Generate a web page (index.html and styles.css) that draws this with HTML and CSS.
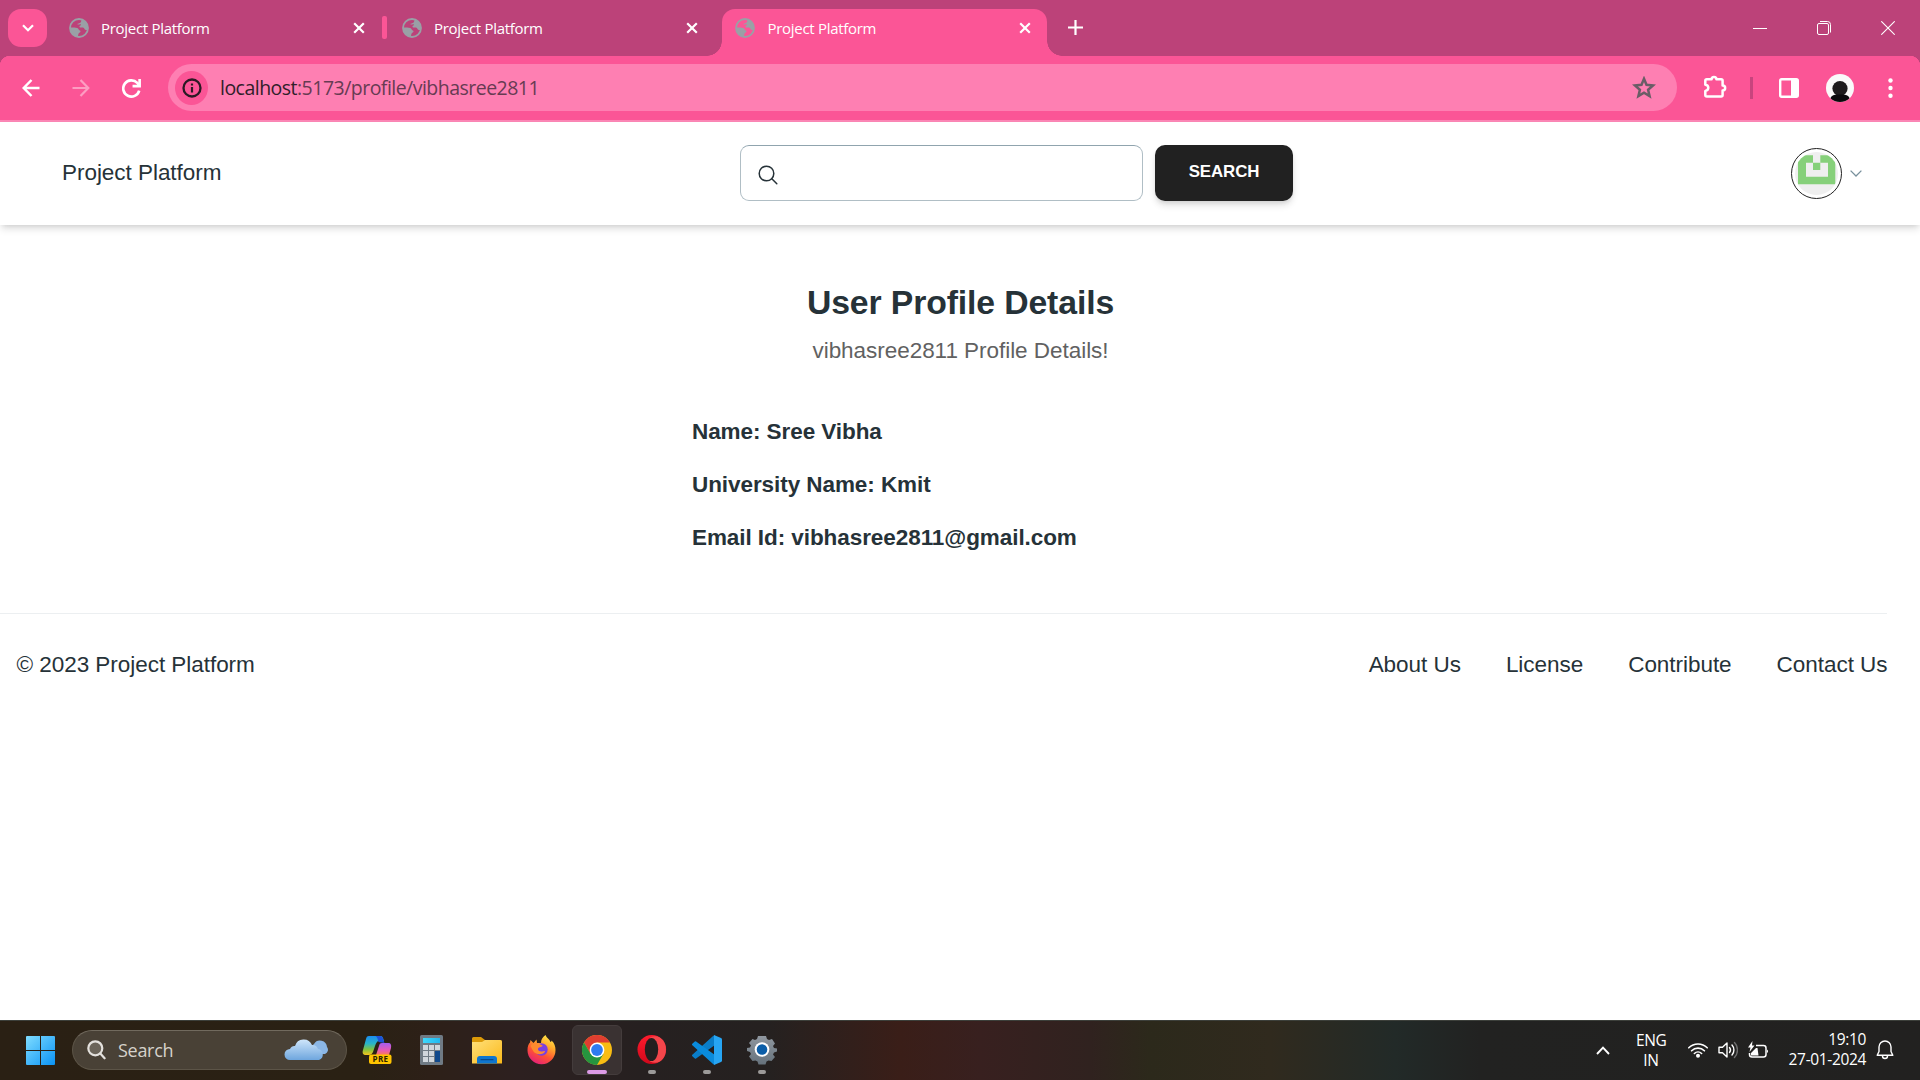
FILE: index.html
```html
<!DOCTYPE html>
<html lang="en">
<head>
<meta charset="utf-8">
<title>Project Platform</title>
<link rel="stylesheet" href="styles.css">
</head>
<body>
<svg width="0" height="0" class="defs" aria-hidden="true">
  <defs>
    <linearGradient id="win" x1="0" y1="0" x2="1" y2="1"><stop offset="0" stop-color="#7fdcff"/><stop offset="1" stop-color="#0a93f5"/></linearGradient>
    <linearGradient id="cloud" x1="0" y1="0" x2="0" y2="1"><stop offset="0" stop-color="#cfe6fb"/><stop offset="1" stop-color="#6ea6de"/></linearGradient>
    <linearGradient id="cop1" x1="0" y1="0" x2="0" y2="1"><stop offset="0" stop-color="#1b8df0"/><stop offset=".4" stop-color="#28b4c8"/><stop offset=".7" stop-color="#7fc241"/><stop offset="1" stop-color="#f8c51c"/></linearGradient>
    <linearGradient id="cop2" x1="0" y1="0" x2="0" y2="1"><stop offset="0" stop-color="#a45df0"/><stop offset=".6" stop-color="#e85bb5"/><stop offset="1" stop-color="#fb7a5a"/></linearGradient>
    <linearGradient id="calc" x1="0" y1="0" x2="1" y2="0"><stop offset="0" stop-color="#3fd8fb"/><stop offset="1" stop-color="#22b8ef"/></linearGradient>
    <linearGradient id="fold" x1="0" y1="0" x2="1" y2="1"><stop offset="0" stop-color="#ffe07a"/><stop offset="1" stop-color="#fbb91a"/></linearGradient>
    <linearGradient id="fox" x1=".8" y1="0" x2=".3" y2="1"><stop offset="0" stop-color="#fff04a"/><stop offset=".35" stop-color="#ffa52b"/><stop offset=".65" stop-color="#ff5233"/><stop offset="1" stop-color="#e41f7b"/></linearGradient>
    <linearGradient id="opera" x1="0" y1="0" x2="0" y2="1"><stop offset="0" stop-color="#ff1b2d"/><stop offset="1" stop-color="#d0081b"/></linearGradient>
    <linearGradient id="gear" x1="0" y1="0" x2="0" y2="1"><stop offset="0" stop-color="#8f979f"/><stop offset="1" stop-color="#66727c"/></linearGradient>
    <symbol id="globe" viewBox="0 0 20 20">
      <circle cx="10" cy="10" r="9" fill="none" stroke="#9aa0a6" stroke-width="1.800"/>
      <path d="M12.500 1.500C16 2.500 18.600 5.500 19 9.400c0 1.500-.8 2.800-2.200 2.600-1.600-.2-1.200-2.200-2.800-2.400-1.300-.2-3 .4-3.500-.8-.3-1 .8-1.400 1.300-1.600.5-.3.200-1.200-.8-1-1.300.2-2.500.6-3-.2 1-.6 3.500-.6 4-2 .3-.9.300-1.600.500-2.500z" fill="#9aa0a6"/>
      <path d="M1.200 9.500c2.800.1 5.300 0 7 .6 1.500.6 1.300 2.100 2.600 2.400 1 .2.900 1.600 0 2-1.400.6-1.700 2-1.800 4.300C4.500 18.400 1.200 14.600 1.200 9.500z" fill="#9aa0a6"/>
    </symbol>
    <symbol id="close" viewBox="0 0 12 12"><path d="M1.200 1.200l9.600 9.600M10.800 1.200l-9.600 9.600" stroke="#fff" stroke-width="2.200"/></symbol>
  </defs>
</svg>

<header class="tabstrip">
  <button class="tab-search" aria-label="Search tabs"><svg width="12" height="8" viewBox="0 0 12 8"><path d="M1 1.200l5 5 5-5" fill="none" stroke="#fff" stroke-width="2.200"/></svg></button>
  <div class="tab tab-divided"><svg class="favicon"><use href="#globe"/></svg><span class="tab-title">Project Platform</span><svg class="tab-close"><use href="#close"/></svg></div>
  <div class="tab"><svg class="favicon"><use href="#globe"/></svg><span class="tab-title">Project Platform</span><svg class="tab-close"><use href="#close"/></svg></div>
  <div class="tab tab-active"><svg class="favicon"><use href="#globe"/></svg><span class="tab-title">Project Platform</span><svg class="tab-close"><use href="#close"/></svg></div>
  <svg class="new-tab" width="15" height="15" viewBox="0 0 15 15"><path d="M7.500 0v15M0 7.500h15" stroke="#fff" stroke-width="2.200"/></svg>
  <div class="window-controls">
    <span><svg width="14" height="14"><path d="M0 7.500h14" stroke="#fff" stroke-width="1"/></svg></span>
    <span><svg width="14" height="14" fill="none" stroke="#fff"><rect x=".5" y="2.500" width="11" height="11" rx="1.500"/><path d="M3 .5h7.500a3 3 0 0 1 3 3V11.500"/></svg></span>
    <span><svg width="14" height="14"><path d="M.3.3l13.400 13.400M13.700.3L.3 13.700" stroke="#fff" stroke-width="1.100"/></svg></span>
  </div>
</header>

<nav class="toolbar">
  <div class="toolbar-nav">
    <svg width="18" height="18" viewBox="0 0 18 18" fill="none" stroke="#fff" stroke-width="2.500"><path d="M17.500 9H2M9.500 1L1.700 9l7.800 8"/></svg>
    <svg width="18" height="18" viewBox="0 0 18 18" fill="none" stroke="#fd9dc2" stroke-width="2.200"><path d="M.5 9H16M8.500 1l7.800 8-7.800 8"/></svg>
    <svg width="19" height="19" viewBox="0 0 18 18" fill="none" stroke="#fff" stroke-width="2.500"><path d="M16.300 11A7.700 7.700 0 1 1 14.500 3.700L16 5.500"/><path d="M16.700 0v6.700H10"/></svg>
  </div>
  <div class="omnibox">
    <span class="site-info"><svg width="20" height="20" viewBox="0 0 20 20"><circle cx="10" cy="10" r="8.500" fill="none" stroke="#2b1a24" stroke-width="2.300"/><path d="M10 9v5.500M10 5.500v2" stroke="#2b1a24" stroke-width="2.200"/></svg></span>
    <span class="url"><b>localhost</b>:5173/profile/vibhasree2811</span>
    <svg class="star" width="24" height="23" viewBox="0 0 24 23"><path d="M12 2.800l2.500 6 6.600.6-5 4.300 1.500 6.400L12 16.700l-5.600 3.400 1.500-6.400-5-4.300 6.600-.6z" fill="none" stroke="#6a5d66" stroke-width="2.500"/></svg>
  </div>
  <svg class="extensions" width="25" height="25" viewBox="0 0 25 25"><path d="M3.800 4.300h4.800c0-3.200 4.800-3.200 4.800 0h4.700q1.500 0 1.500 1.500v4.700c3.400 0 3.400 5 0 5v4.500q0 1.500-1.500 1.500H3.800q-1.500 0-1.500-1.500v-4c4-.8 4-5.600 0-6.200v-4q0-1.500 1.500-1.500z" fill="none" stroke="#fff" stroke-width="2.500" stroke-linejoin="round"/></svg>
  <i class="toolbar-sep"></i>
  <svg class="side-panel" width="20" height="20" viewBox="0 0 20 20"><rect x="1.200" y="1.200" width="17.600" height="17.600" rx="1.500" fill="none" stroke="#fff" stroke-width="2.400"/><path d="M12 1h7v18h-7z" fill="#fff"/></svg>
  <svg class="profile" width="28" height="28" viewBox="0 0 28 28"><clipPath id="pc"><circle cx="14" cy="14" r="14"/></clipPath><g clip-path="url(#pc)"><path d="M0 0h28v28H0z" fill="#fafafa"/><circle cx="14" cy="14.500" r="7.600" fill="#1d1b1d"/><path d="M4 28c0-6 2-7.500 10-7.500s10 1.500 10 7.500z" fill="#0a0a0d"/></g></svg>
  <svg class="kebab" width="5" height="20" viewBox="0 0 5 20" fill="#fff"><circle cx="2.500" cy="2.500" r="2.200"/><circle cx="2.500" cy="10" r="2.200"/><circle cx="2.500" cy="17.700" r="2.200"/></svg>
</nav>

<div class="page">
  <div class="site-header">
    <a class="brand">Project Platform</a>
    <form class="search">
      <label class="search-box"><svg width="20" height="20" viewBox="0 0 20 20" fill="none" stroke="#263238" stroke-width="1.500" stroke-linecap="round"><circle cx="8.500" cy="8.500" r="7.300"/><path d="M13.800 13.800l5 5"/></svg></label>
      <button class="search-btn" type="button">Search</button>
    </form>
    <div class="account">
      <span class="avatar"><svg width="43" height="43" viewBox="0 0 43 43"><clipPath id="ac"><circle cx="21.500" cy="21.500" r="21.500"/></clipPath><g clip-path="url(#ac)"><path d="M0 0h43v43H0z" fill="#efefef"/><path d="M3 8.300L8 3.300h10v7.400h-7v14h22v-14h-7.700v-7.400h10l5 5v24H3z" fill="#86d07a"/><path d="M18 10.700h7.300v7.300H18z" fill="#86d07a"/></g></svg></span>
      <svg width="12" height="7" viewBox="0 0 12 7"><path d="M.6.6L6 6l5.400-5.400" fill="none" stroke="#78909c" stroke-width="1.300"/></svg>
    </div>
  </div>
  <main class="details">
    <h4>User Profile Details</h4>
    <p class="lead">vibhasree2811 Profile Details!</p>
    <div class="fields">
      <h6>Name: Sree Vibha</h6>
      <h6>University Name: Kmit</h6>
      <h6>Email Id: vibhasree2811@gmail.com</h6>
    </div>
  </main>
  <footer class="site-footer">
    <span>© 2023 Project Platform</span>
    <div class="links"><a>About Us</a><a>License</a><a>Contribute</a><a>Contact Us</a></div>
  </footer>
</div>

<div class="taskbar">
  <svg class="start" width="29" height="29" viewBox="0 0 29 29" fill="url(#win)"><path d="M1 0h13v14H0V1a1 1 0 0 1 1-1zM15 0h13a1 1 0 0 1 1 1v13H15zM0 15h14v14H1a1 1 0 0 1-1-1zM15 15h14v13a1 1 0 0 1-1 1H15z"/></svg>
  <div class="task-search">
    <svg width="19" height="20" viewBox="0 0 19 20" fill="none" stroke="#e4e1dd" stroke-width="2.200" stroke-linecap="round"><circle cx="8.300" cy="8.300" r="7" fill="#6b6459"/><path d="M13.300 13.500l4.300 4.800"/></svg>
    <span>Search</span>
    <svg class="clouds" width="46" height="22" viewBox="0 0 46 22"><path d="M30 15a6 6 0 0 1 0-10 7 7 0 0 1 13 3 4.500 4.500 0 0 1-2 7z" fill="#8bb7e6"/><path d="M6 21a5.500 5.500 0 0 1 0-11 5 5 0 0 1 5-3 9 9 0 0 1 17-1 6 6 0 0 1 6 4 5.700 5.700 0 0 1 1 11z" fill="url(#cloud)"/></svg>
  </div>
  <div class="apps">
    <span class="app"><svg width="30" height="30" viewBox="0 0 30 30"><path d="M7 1h11c3 0 3 2 4 5h-5c-2 0-3 2-4 5l-2 6c-1 2-2 3-4 3H4c-3 0-4-2-3-5L4 4c.5-2 1-3 3-3z" fill="url(#cop1)"/><path d="M18 1c3 0 3 3 4.500 7l-6-1c-1-3-1-5-3-6z" fill="#1d52d8"/><path d="M20 8h6c3 0 3.500 2 3 5l-2 7H14l3-9c.500-2 1-3 3-3z" fill="url(#cop2)"/><rect x="7" y="19.500" width="22.500" height="9.500" rx="2" fill="#ffc400"/><text x="18.500" y="27" text-anchor="middle" class="pre">PRE</text></svg></span>
    <span class="app"><svg width="30" height="30" viewBox="0 0 30 30"><rect x="3" width="23" height="30" rx="1.500" fill="#6f7a84"/><path d="M6 3h17v5H6z" fill="url(#calc)"/><path d="M6 10h5v5H6zM12 10h5v5h-5zM18 10h5v5h-5zM6 16h5v5H6zM12 16h5v5h-5zM6 22h5v5H6zM12 22h5v5h-5z" fill="#d0d6dc"/><path d="M18 16h5v11h-5z" fill="#10498c"/></svg></span>
    <span class="app"><svg width="30" height="30" viewBox="0 0 30 30"><path d="M0 3.500A1.500 1.500 0 0 1 1.500 2H9l4 3h15a2 2 0 0 1 2 2v5H0z" fill="#dc9a08"/><path d="M0 7h10l3-2h15a2 2 0 0 1 2 2v21.500H0z" fill="url(#fold)"/><path d="M5 28.500V24a3 3 0 0 1 3-3h14a3 3 0 0 1 3 3v4.500z" fill="#0f76cf"/><path d="M9 24.700h12" stroke="#0a4a8c" stroke-width="1.200" stroke-linecap="round"/></svg></span>
    <span class="app"><svg width="30" height="30" viewBox="0 0 30 30"><path d="M18.500 0c1 3 4 4 5 7 1-.5 1-1 1-1.500C27.500 8 28.500 11.500 28.500 15A14 14 0 0 1 .5 15.500C.5 11 1.500 9 3 7.500L3.500 5l3 3 3-3.500.5 3.500h4c0-4 2-6 4.500-8z" fill="url(#fox)"/><circle cx="14.500" cy="14.500" r="6.200" fill="#7a3fe0"/><path d="M3.500 11c2-3 6-4 9-2 1 .8 3 1 3 1.800 0 1.200-3.500 1.200-4.500 2.700-.5 2 2 3.500 4 3 1.500-.5 3-.8 3 0-.8 3-8.500 4-11.500 0-1.500-2-2-4-3-5.500z" fill="#ff8a2e"/></svg></span>
    <span class="app app-current"><svg width="30" height="30" viewBox="0 0 30 30"><circle cx="15" cy="15" r="15" fill="#f9bd13"/><path d="M2 7.500A15 15 0 0 1 28 7.500H15L8.500 18.700z" fill="#df3e30"/><path d="M2 7.500l6.500 11.200 13-0L15 30A15 15 0 0 1 2 7.500z" fill="#26953f"/><circle cx="15" cy="15" r="7.400" fill="#fff"/><circle cx="15" cy="15" r="5.900" fill="#2f7bf0"/></svg></span>
    <span class="app app-open"><svg width="30" height="30" viewBox="0 0 30 30"><ellipse cx="14.800" cy="14.500" rx="14.300" ry="14.500" fill="url(#opera)"/><path d="M13 2.500C22-2 29 6 29 14.500S22 31 13 26.500z" fill="#f4464b"/><ellipse cx="14.500" cy="14.500" rx="6.700" ry="11.500" fill="#241f1f"/></svg></span>
    <span class="app app-open"><svg width="30" height="30" viewBox="0 0 30 30"><path d="M1 20.500L22 1.500v8L3.500 22.800z" fill="#0a7dc8" stroke="#0a7dc8" stroke-width="2" stroke-linejoin="round"/><path d="M1 9.500l2.500-2.300L22 20.500v8z" fill="#0a8bdc" stroke="#0a8bdc" stroke-width="2" stroke-linejoin="round"/><path d="M22 0l7 3a2 2 0 0 1 1 1.500v21a2 2 0 0 1-1 1.500l-7 3z" fill="#27a5f3"/></svg></span>
    <span class="app app-open"><svg width="30" height="30" viewBox="0 0 30 30"><path d="M10 4l1-3h8l1 3 2 1 3-1 3 4.500-2 2.500 1 2 3 .500v3l-3 1-1 2 2 2.500-3.500 4-3-.500-2 1-1 3h-7l-1-3-2-1-3 .500L2 21.500 4 19l-1-2-3-1v-3l3-.500 1-2L2 8l3.500-4L8 5z" fill="url(#gear)"/><circle cx="15" cy="14.500" r="7.300" fill="#fff"/><circle cx="15" cy="14.500" r="5.300" fill="#0b5ea8"/></svg></span>
  </div>
  <div class="tray">
    <svg class="tray-up" width="14" height="9" viewBox="0 0 14 9"><path d="M1 8l6-6.300L13 8" fill="none" stroke="#fff" stroke-width="1.900"/></svg>
    <span class="lang">ENG<br>IN</span>
    <svg class="wifi" width="20" height="16" viewBox="0 0 20 16" fill="none" stroke="#fff" stroke-width="1.600" stroke-linecap="round"><path d="M.8 5.800a13 13 0 0 1 18.400 0M3.600 8.800a9 9 0 0 1 12.800 0M6.400 11.500a5.200 5.200 0 0 1 7.200 0"/><circle cx="10" cy="13.800" r="1.200" fill="#fff"/></svg>
    <svg class="sound" width="20" height="18" viewBox="0 0 20 18" fill="none" stroke="#fff" stroke-width="1.400" stroke-linecap="round"><path d="M1 6.200h3.500L9 2v14l-4.500-4.200H1z" stroke-linejoin="round"/><path d="M11.500 6.500a4 4 0 0 1 0 5M14 4a7.500 7.500 0 0 1 0 10"/><path d="M16.500 1.500a11 11 0 0 1 0 15" stroke="#6d6d6d"/></svg>
    <svg class="battery" width="21" height="18" viewBox="0 0 21 18"><path d="M8 4.500h7.500A2.500 2.500 0 0 1 18 7v6.500a2.500 2.500 0 0 1-2.500 2.500H4a2.500 2.500 0 0 1-2.500-2.500V12" fill="none" stroke="#fff" stroke-width="1.500"/><path d="M19 8.500a2 2 0 0 1 0 3.500zM3 14.500V12l5-5v0h1.500l1 7.500zM4.500 0L0 6.500h2.500L1.500 11 6.500 4.500H4z" fill="#fff"/></svg>
    <span class="clock">19:10<br>27-01-2024</span>
    <svg class="bell" width="18" height="20" viewBox="0 0 18 20" fill="none" stroke="#fff" stroke-width="1.400"><path d="M1.200 15.300L3 11.500V7a6 6 0 0 1 12 0v4.500l1.800 3.800z" stroke-linejoin="round"/><path d="M6.500 16a2.500 2.500 0 0 0 5 0"/></svg>
  </div>
</div>
</body>
</html>
```

FILE: styles.css
```css
* { box-sizing: border-box; }
body { margin: 0; width: 1920px; height: 1080px; overflow: hidden; background: #fff; font-family: "Liberation Sans", Arial, sans-serif; display: flex; flex-direction: column; }
svg { display: block; flex: none; }
.defs { position: absolute; }
button { border: 0; font: inherit; padding: 0; }

/* Browser tabs */
.tabstrip { height: 56px; flex: none; background: #bc4279; display: flex; padding-left: 8px; }
.tab-search { width: 39px; height: 38px; margin: 9px 9px 0 0; border-radius: 13px; background: #fb5596; display: flex; align-items: center; justify-content: center; }
.tab { position: relative; width: 325px; margin: 9px 8px 0 0; padding: 0 16.500px 9px 12.500px; display: flex; align-items: center; color: #fff; }
.favicon { width: 20px; height: 20px; margin-right: 12.500px; }
.tab-title { flex: 1; font: 15px/20px "Open Sans", "Noto Sans", sans-serif; letter-spacing: -.3px; white-space: nowrap; }
.tab-close { width: 12px; height: 12px; }
.tab-divided::after { content: ""; position: absolute; right: -6px; top: 7px; width: 5px; height: 23px; border-radius: 2px; background: #fb5596; }
.tab-active { background: #fb5596; border-radius: 13px 13px 0 0; margin-right: 0; padding-left: 13px; padding-right: 16px; }
.tab-active::before, .tab-active::after { content: ""; position: absolute; bottom: 0; width: 15px; height: 15px; }
.tab-active::before { left: -15px; background: radial-gradient(circle at 0 0, transparent 14.5px, #fb5596 15px); }
.tab-active::after { right: -15px; background: radial-gradient(circle at 100% 0, transparent 14.5px, #fb5596 15px); }
.new-tab { margin: 20px 0 0 21px; }
.window-controls { margin-left: auto; display: flex; align-items: center; height: 56px; }
.window-controls span { width: 64px; display: flex; justify-content: center; }

/* Address bar */
.toolbar { height: 66px; flex: none; display: flex; align-items: center; background: radial-gradient(circle at 10px 10px, #fb5596 10px, transparent 10.500px) 0 0 / 10px 10px no-repeat, radial-gradient(circle at 0 10px, #fb5596 10px, transparent 10.500px) 100% 0 / 10px 10px no-repeat, linear-gradient(#fb5596, #fb5596) 10px 0 / 1900px 100% no-repeat, linear-gradient(#bc4279 10px, #fb5596 10px); border-bottom: 2px solid #fb86b5; }
.toolbar-nav { width: 168px; padding-left: 22px; display: flex; gap: 32px; }
.omnibox { width: 1509px; height: 47px; margin-top: -1px; border-radius: 24px; background: #fe7fb2; display: flex; align-items: center; padding: 0 21px 0 7px; }
.site-info { width: 33px; height: 34px; border-radius: 50%; background: #fb5596; display: flex; align-items: center; justify-content: center; }
.url { flex: 1; margin-left: 12px; font: 19.5px/30px "Open Sans", "Noto Sans", sans-serif; letter-spacing: -.52px; color: #673b52; }
.url b { font-weight: 400; color: #30202a; }
.extensions { margin-left: 26px; margin-top: -2px; }
.toolbar-sep { width: 3px; height: 22px; margin-left: 22px; background: #c8447e; }
.side-panel { margin-left: 26px; }
.profile { margin-left: 27px; }
.kebab { margin-left: 33.500px; }

/* Site */
.page { flex: 1; font-size: 22.5px; line-height: 36.56px; color: #263238; }
.site-header { height: 103px; display: grid; grid-template-columns: 678px 553px 1fr; align-items: center; padding: 0 58px 0 62px; box-shadow: 0 5px 7.500px -1px rgba(0,0,0,.12), 0 2.500px 5px -2.500px rgba(0,0,0,.12); }
.search { display: flex; gap: 12px; margin-bottom: 2px; }
.brand, .site-footer, .lead { letter-spacing: -.04px; }
.search-box { width: 403px; height: 56px; border: 1px solid #b0bec5; border-top-color: #90a4ae; border-radius: 9px; padding: 19px 0 0 17px; }
.search-btn { width: 138px; height: 56px; border-radius: 10px; background: #212121; color: #fff; font-size: 16.875px; line-height: 54px; padding-bottom: 1px; font-weight: 700; letter-spacing: -.1px; text-transform: uppercase; box-shadow: 0 5px 7px -1px rgba(33,33,33,.15), 0 2.500px 5px -2.500px rgba(33,33,33,.15); }
.account { display: flex; align-items: center; justify-content: flex-end; gap: 8px; }
.avatar { width: 51px; height: 51px; border: 1px solid #212121; border-radius: 50%; display: flex; align-items: center; justify-content: center; }
.details { display: flex; flex-direction: column; align-items: center; padding-top: 54px; }
h4, h6, p { margin: 0; }
h4 { font-size: 33.75px; line-height: 46.4px; font-weight: 700; letter-spacing: -.12px; padding-left: 1px; }
.lead { margin-top: 7.600px; padding-left: 1px; color: #616161; }
.fields { width: 536px; margin-top: 44px; display: grid; gap: 16.440px; }
h6 { font-size: 22.5px; font-weight: 700; letter-spacing: -.07px; }
.site-footer { width: 1888px; margin-top: 56.500px; padding: 34px 1px 0 16.500px; display: flex; justify-content: space-between; background: linear-gradient(#eceff1, #eceff1) 0 0 / 1887px 1px no-repeat; }
.links { display: flex; gap: 45px; margin-right: -.5px; }

/* Taskbar */
.taskbar { height: 60px; flex: none; display: flex; align-items: center; border-top: 1px solid #3c3f3a; padding: 0 0 1px 26px; color: #fff; background: linear-gradient(90deg, #2a2014 0, #2a2114 370px, #2d2018 430px, #2d2020 520px, #262020 640px, #252120 770px, #3a1e18 900px, #38201f 980px, #30221f 1090px, #2c291b 1150px, #302a1e 1270px, #222a28 1395px, #222221 1480px, #222120 100%); font-family: "Open Sans", "Noto Sans", sans-serif; }
.task-search { width: 275px; height: 40px; margin-left: 17px; padding: 0 16px 0 14px; border: 1px solid #5c5447; border-top-color: #716a5e; border-radius: 20px; background: #494136; display: flex; align-items: center; font-size: 18px; line-height: 36px; letter-spacing: -.3px; color: #d6d2cb; }
.task-search span { flex: 1; margin: 0 0 1px 12px; }
.apps { display: flex; gap: 5px; margin-left: 5px; }
.app { position: relative; width: 50px; height: 50px; border-radius: 6px; display: flex; align-items: center; justify-content: center; }
.app-current { background: #3a3232; border: 1px solid #443c3c; }
.app-current::after, .app-open::after { content: ""; position: absolute; bottom: 1px; left: 21px; width: 8px; height: 4px; border-radius: 2px; background: #9c9a99; }
.app-current::after { left: 14px; width: 20px; bottom: 0; background: #dc9be6; }
.pre { font: 700 8px "Open Sans", sans-serif; letter-spacing: .4px; fill: #2a2000; }
.tray { margin-left: auto; display: flex; align-items: center; font-size: 15.5px; line-height: 20px; letter-spacing: -.35px; padding-right: 26px; }
.lang { width: 30px; margin: 0 0 1px 26px; text-align: center; }
.wifi { margin-left: 22px; }
.sound { margin-left: 10px; }
.battery { margin-left: 10px; }
.clock { width: 90px; margin: 0 0 2px 7px; text-align: right; }
.bell { margin-left: 10px; }
```
